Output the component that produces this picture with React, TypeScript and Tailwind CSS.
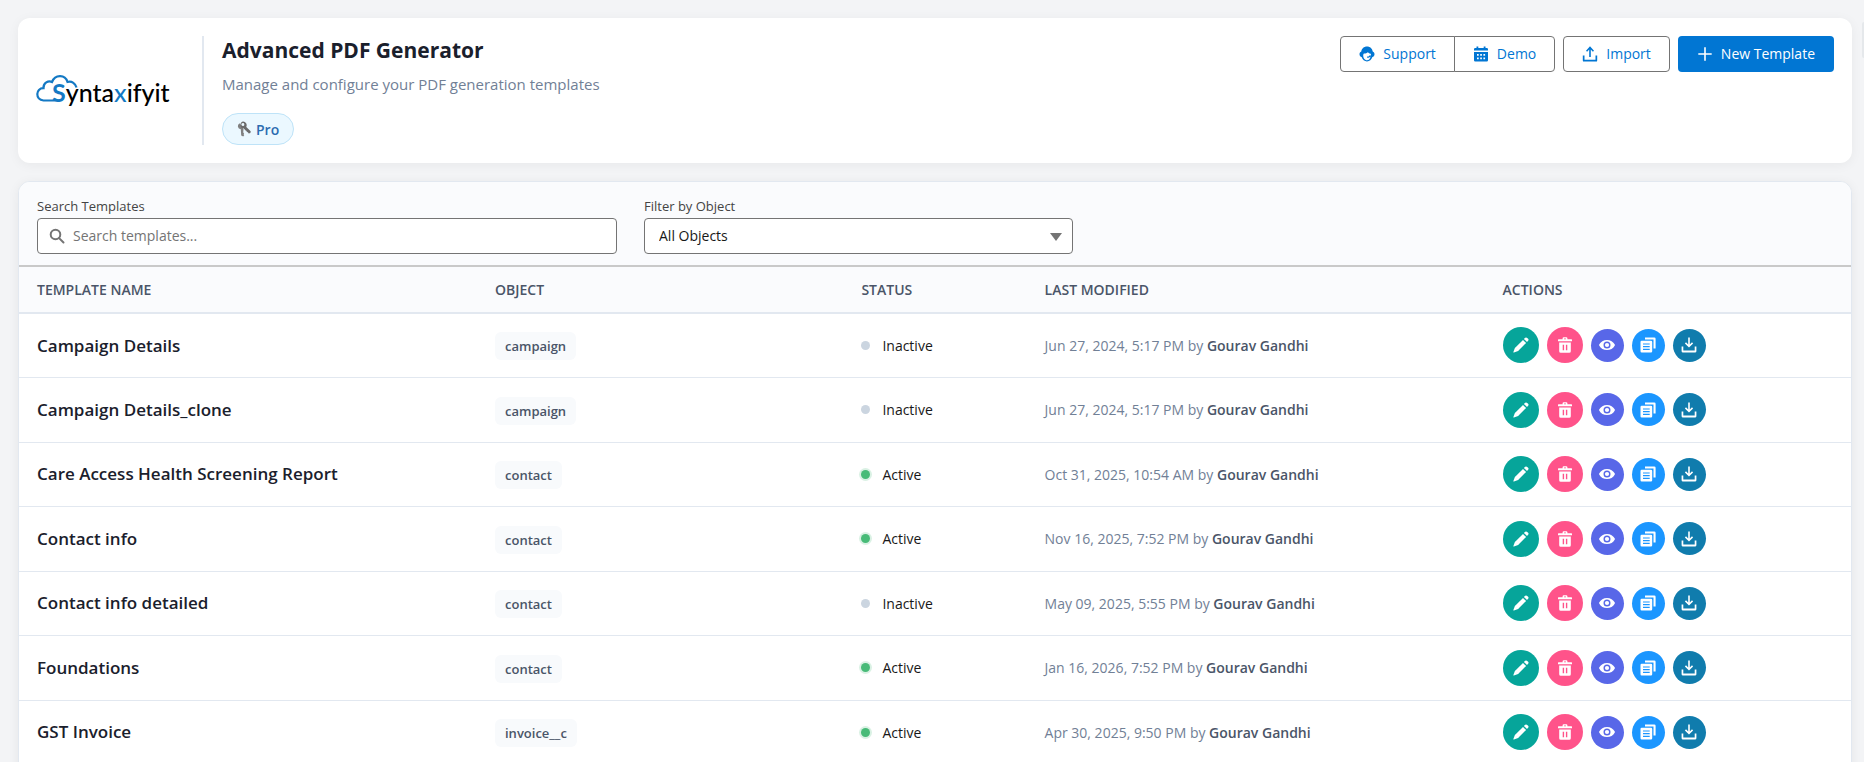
import type { ReactNode } from 'react';

type Template = {
  name: string;
  object: string;
  active: boolean;
  modified: string;
  by: string;
};

const templates: Template[] = [
  { name: 'Campaign Details', object: 'campaign', active: false, modified: 'Jun 27, 2024, 5:17 PM', by: 'Gourav Gandhi' },
  { name: 'Campaign Details_clone', object: 'campaign', active: false, modified: 'Jun 27, 2024, 5:17 PM', by: 'Gourav Gandhi' },
  { name: 'Care Access Health Screening Report', object: 'contact', active: true, modified: 'Oct 31, 2025, 10:54 AM', by: 'Gourav Gandhi' },
  { name: 'Contact info', object: 'contact', active: true, modified: 'Nov 16, 2025, 7:52 PM', by: 'Gourav Gandhi' },
  { name: 'Contact info detailed', object: 'contact', active: false, modified: 'May 09, 2025, 5:55 PM', by: 'Gourav Gandhi' },
  { name: 'Foundations', object: 'contact', active: true, modified: 'Jan 16, 2026, 7:52 PM', by: 'Gourav Gandhi' },
  { name: 'GST Invoice', object: 'invoice__c', active: true, modified: 'Apr 30, 2025, 9:50 PM', by: 'Gourav Gandhi' },
];

const Icon = ({ className, children }: { className: string; children: ReactNode }) => (
  <svg viewBox="0 0 16 16" className={className} fill="currentColor" aria-hidden="true">
    {children}
  </svg>
);

const UploadIcon = () => (
  <Icon className="mt-0.5 size-4">
    <path d="M8 0.3 12 4.8 10.9 5.8 8.8 3.6V11H7.2V3.6L5.1 5.8 4 4.8Z" />
    <path d="M0.8 9.5H2.5V13.8H13.5V9.5H15.2V14.4Q15.2 15.6 14 15.6H2Q0.8 15.6 0.8 14.4Z" />
  </Icon>
);

const SupportIcon = () => (
  <Icon className="mt-0.5 size-4">
    <path d="M8 0.6C4.8 0.6 2.6 2.8 2.3 5.6 1.2 6 0.5 7.1 0.5 8.3S1.3 10.8 2.6 11.1C3.5 13.7 5.5 15.5 8 15.5S12.5 13.7 13.4 11.1C14.7 10.8 15.5 9.6 15.5 8.3S14.8 6 13.7 5.6C13.4 2.8 11.2 0.6 8 0.6ZM8 14.2C5.6 14.2 4.2 11.8 4.2 9.2 4.2 8.5 4.5 7.9 4.9 7.5 6.4 7.6 7.9 7.1 8.9 6.2 9.5 7.1 10.7 7.7 11.9 7.8V9.4H10.3C10 10.3 9.2 10.7 8.1 10.6V11.7C9.5 11.8 10.7 11.4 11.5 10.5 11.200 12.700 10 14.200 8 14.200Z" />
  </Icon>
);

const CalendarIcon = () => (
  <Icon className="mt-0.5 size-4">
    <path d="M1 3.2Q1 2 2.2 2H3.5V0.6H5.3V2H10.7V0.6H12.5V2H13.8Q15 2 15 3.2V4.6H1Z" />
    <path fillRule="evenodd" d="M1 6H15V14.3Q15 15.5 13.8 15.5H2.2Q1 15.5 1 14.3ZM4 8V9.7H5.7V8ZM7.2 8V9.7H8.9V8ZM10.4 8V9.7H12.1V8ZM4 11.5V13.2H5.7V11.5ZM7.2 11.5V13.2H8.9V11.5ZM10.4 11.5V13.2H12.1V11.5Z" />
  </Icon>
);

const PlusIcon = () => (
  <Icon className="mt-0.5 size-4">
    <path d="M7.2 1.3H8.8V7.2H14.7V8.8H8.8V14.7H7.2V8.8H1.3V7.2H7.2Z" />
  </Icon>
);

const KeyIcon = () => (
  <svg viewBox="0 0 14 16" className="h-4 w-3.5" aria-hidden="true">
    <path d="M2.8 2.2Q0.4 3.6 0.9 5.8T3.8 8.3L4.2 14.6 6.2 15.4 7.2 14.3 6.6 13.3 7.1 12.3 6.2 11.5 6.5 8.2" fill="#808080" />
    <path fillRule="evenodd" fill="#6b6b6b" d="M5.9 0.6A3.6 3.6 0 0 1 9.3 5.9L13.7 10.3 13.4 12.1 11.7 12.4 10.9 11.2 9.8 11 9.6 9.9 8.6 9.5 6.8 7.6A3.6 3.6 0 0 1 5.9 0.6ZM5.8 2A1.5 1.5 0 1 0 5.900 5 1.500 1.500 0 0 0 5.800 2Z" />
  </svg>
);

const PencilIcon = () => (
  <Icon className="size-4">
    <path d="M10 2.9 13.1 6 5.1 14 0.9 15.6Q0.3 15.7 0.4 15.1L1.9 10.9Z" />
    <path d="M10.9 2 12.2 0.8Q13.2 0 14.2 0.9L15.1 1.8Q16 2.8 15.1 3.8L14 5.1Z" />
  </Icon>
);

const TrashIcon = () => (
  <Icon className="size-4">
    <path fillRule="evenodd" d="M5.6 2.2V1.3Q5.6 0.2 6.7 0.2H9.3Q10.4 0.2 10.4 1.3V2.2H14.4Q15 2.2 15 2.8V4.3H1V2.8Q1 2.2 1.6 2.2ZM7 2.2H9V1.5H7Z" />
    <path fillRule="evenodd" d="M2.2 5.6H13.8V14.2Q13.8 15.8 12.2 15.8H3.8Q2.2 15.8 2.2 14.2ZM5.7 7.8V13.3H7.1V7.8ZM8.9 7.8V13.3H10.3V7.8Z" />
  </Icon>
);

const EyeIcon = () => (
  <Icon className="size-4">
    <path fillRule="evenodd" d="M0.2 7.6C1.7 4.7 4.6 2.9 8 2.9S14.3 4.7 15.8 7.6Q16 8 15.8 8.4C14.3 11.3 11.4 13.1 8 13.1S1.7 11.3 0.2 8.4Q0 8 0.2 7.6ZM8 4.5A3.5 3.5 0 1 0 8 11.5 3.5 3.5 0 0 0 8 4.5Z" />
    <circle cx="8" cy="8" r="2.1" />
  </Icon>
);

const CopyIcon = () => (
  <Icon className="size-4">
    <path d="M5 0.5H14.3Q15.6 0.5 15.6 1.8V11.5H13.5V2.6H5Z" />
    <path fillRule="evenodd" d="M1.7 3.8H11Q12.2 3.8 12.2 5V14.3Q12.2 15.5 11 15.5H1.7Q0.5 15.5 0.5 14.3V5Q0.5 3.8 1.7 3.8ZM3 6.4V7.5H9.7V6.4ZM3 9.1V10.2H9.7V9.1ZM3 11.8V12.9H9.7V11.8Z" />
  </Icon>
);

const DownloadIcon = () => (
  <Icon className="size-4">
    <path d="M7.2 0.4H8.8V7.5L11 5.3 12.1 6.4 8 10.6 3.9 6.4 5 5.3 7.2 7.5Z" />
    <path d="M0.6 9.5H2.3V13.6H13.7V9.5H15.4V14.2Q15.4 15.6 14 15.6H2Q0.6 15.6 0.6 14.2Z" />
  </Icon>
);

const Logo = () => (
  <div className="relative flex h-9 w-34 items-end" role="img" aria-label="Syntaxifyit">
    <svg viewBox="0 0 52 36" className="absolute bottom-1 left-0 h-9 w-13" fill="none" stroke="#1479c4" strokeWidth="2.2" aria-hidden="true">
      <path d="M24 32.5H7.5C-1 32 -0.5 20 7.5 20.2 7 15 12.5 12 16 14 19 6.5 29 6 31.5 14 36 12.8 39.5 15.5 40.5 19.5" />
    </svg>
    <span className="relative pl-4 font-[Lato] text-[25px] leading-8 font-medium text-black">
      <span className="font-bold text-[#1479c4]">S</span>ynta<span className="text-[#1479c4]">x</span>ifyit
    </span>
  </div>
);

const outline = 'flex h-9 items-center gap-2 border border-[#747474] bg-white px-[18px] pb-0.5 text-[#0176d3]';

const App = () => {
  return (
    <div className="relative min-h-screen bg-[#f3f4f6] p-[18px] pr-3 font-['Open_Sans',sans-serif] text-[14px] text-[#181818]">
      {/* collapsed side tab on the window edge */}
      <div className="absolute top-[22px] right-0 h-9 w-0.5 rounded-l bg-[#e5e8eb]" aria-hidden="true" />

      {/* HEADER */}
      <header className="flex items-start justify-between rounded-xl bg-white p-[18px] shadow-[0_2px_12px_rgba(0,0,0,0.05)]">
        <div className="flex">
          <div className="flex w-[168px] items-center border-r-2 border-[#e2e8f0] pb-0.5">
            <Logo />
          </div>
          <div className="pl-[18px]">
            <h1 className="text-[21px] leading-7 font-bold text-[#1a202c]">Advanced PDF Generator</h1>
            <p className="mt-2 text-[15px] leading-6 text-[#718096]">Manage and configure your PDF generation templates</p>
            <span className="mt-[17px] inline-flex h-8 items-center gap-[5px] rounded-full border border-[#bee3f8] bg-[#ebf8ff] px-3.5 text-[14px] font-semibold text-[#2b6cb0]">
              <KeyIcon />
              Pro
            </span>
          </div>
        </div>

        <div className="flex gap-2">
          <div className="flex">
            <button type="button" className={`${outline} rounded-l`}>
              <SupportIcon />
              Support
            </button>
            <button type="button" className={`${outline} -ml-px rounded-r`}>
              <CalendarIcon />
              Demo
            </button>
          </div>
          <button type="button" className={`${outline} rounded`}>
            <UploadIcon />
            Import
          </button>
          <button type="button" className="flex h-9 items-center gap-2 rounded bg-[#0176d3] px-[19px] pb-0.5 text-white">
            <PlusIcon />
            New Template
          </button>
        </div>
      </header>

      {/* TEMPLATE LIST */}
      <main className="mt-[18px] overflow-hidden rounded-xl border border-[#e2e8f0] bg-white pb-6 shadow-[0_2px_12px_rgba(0,0,0,0.06)]">
        <div className="flex gap-[27px] border-b-2 border-[#c9c9c9] bg-[#fafbfd] px-[18px] pt-[14px] pb-[11px]">
          <div className="w-[580px]">
            <label htmlFor="search" className="mb-0.5 block text-[13px] leading-5 text-[#444444]">Search Templates</label>
            <div className="relative">
              <svg viewBox="0 0 16 16" className="absolute top-2.5 left-3 size-4" fill="none" stroke="#747474" strokeWidth="2" aria-hidden="true">
                <circle cx="6.5" cy="6.5" r="4.8" />
                <path d="M10.1 10.1 14.5 14.5" strokeLinecap="round" />
              </svg>
              <input
                id="search"
                type="search"
                placeholder="Search templates..."
                className="h-9 w-full rounded border border-[#747474] bg-white pr-3 pb-0.5 pl-[35px] placeholder:text-[#747474]"
              />
            </div>
          </div>
          <div className="w-[429px]">
            <label htmlFor="object" className="mb-0.5 block text-[13px] leading-5 text-[#444444]">Filter by Object</label>
            <div className="relative">
              <select id="object" className="h-9 w-full appearance-none rounded border border-[#747474] bg-white px-3.5 pb-0.5">
                <option>All Objects</option>
              </select>
              <svg viewBox="0 0 12 8" className="pointer-events-none absolute top-[15px] right-[11px] h-2 w-3" fill="#747474" aria-hidden="true">
                <path d="M0 0H12L6 8Z" />
              </svg>
            </div>
          </div>
        </div>

        <table className="w-full table-fixed border-collapse text-left">
          <thead>
            <tr className="h-[46px] border-b-2 border-[#e2e8f0] bg-[#fafbfd] text-[14px] text-[#4a5568]">
              <th className="w-1/4 px-[18px] font-semibold">TEMPLATE NAME</th>
              <th className="w-1/5 px-[18px] font-semibold">OBJECT</th>
              <th className="w-[10%] px-[18px] font-semibold">STATUS</th>
              <th className="w-1/4 px-[18px] font-semibold">LAST MODIFIED</th>
              <th className="w-1/5 px-[18px] font-semibold">ACTIONS</th>
            </tr>
          </thead>
          <tbody>
            {templates.map((t) => (
              <tr key={t.name} className="h-16 border-b border-[#e2e8f0] even:h-[65px]">
                <td className="px-[18px] text-[17px] font-semibold text-[#1a202c]">{t.name}</td>
                <td className="px-[18px] pt-0.5">
                  <span className="inline-block rounded-md bg-[#f8fafc] px-2.5 text-[13px] leading-7 font-semibold text-[#4a5568]">{t.object}</span>
                </td>
                <td className="px-[18px]">
                  <span className="flex items-center gap-3">
                    <span className={t.active ? 'size-[9px] rounded-full bg-[#48bb78] ring-2 ring-[#48bb78]/20' : 'size-[9px] rounded-full bg-[#cbd5e0]'} />
                    {t.active ? 'Active' : 'Inactive'}
                  </span>
                </td>
                <td className="px-[18px] text-[#718096]">
                  {t.modified} by <strong className="font-semibold text-[#4a5568]">{t.by}</strong>
                </td>
                <td className="px-[18px]">
                  <div className="flex items-center gap-2 text-white">
                    <button type="button" aria-label="Edit" className="flex size-9 items-center justify-center rounded-full bg-[#06a59a]">
                      <PencilIcon />
                    </button>
                    <button type="button" aria-label="Delete" className="flex size-9 items-center justify-center rounded-full bg-[#ff538a]">
                      <TrashIcon />
                    </button>
                    <button type="button" aria-label="Preview" className="flex size-[33px] items-center justify-center rounded-full bg-[#5867e8]">
                      <EyeIcon />
                    </button>
                    <button type="button" aria-label="Clone" className="flex size-[33px] items-center justify-center rounded-full bg-[#1b96ff]">
                      <CopyIcon />
                    </button>
                    <button type="button" aria-label="Download" className="flex size-[33px] items-center justify-center rounded-full bg-[#107cad]">
                      <DownloadIcon />
                    </button>
                  </div>
                </td>
              </tr>
            ))}
          </tbody>
        </table>
      </main>
    </div>
  );
};

export default App;
